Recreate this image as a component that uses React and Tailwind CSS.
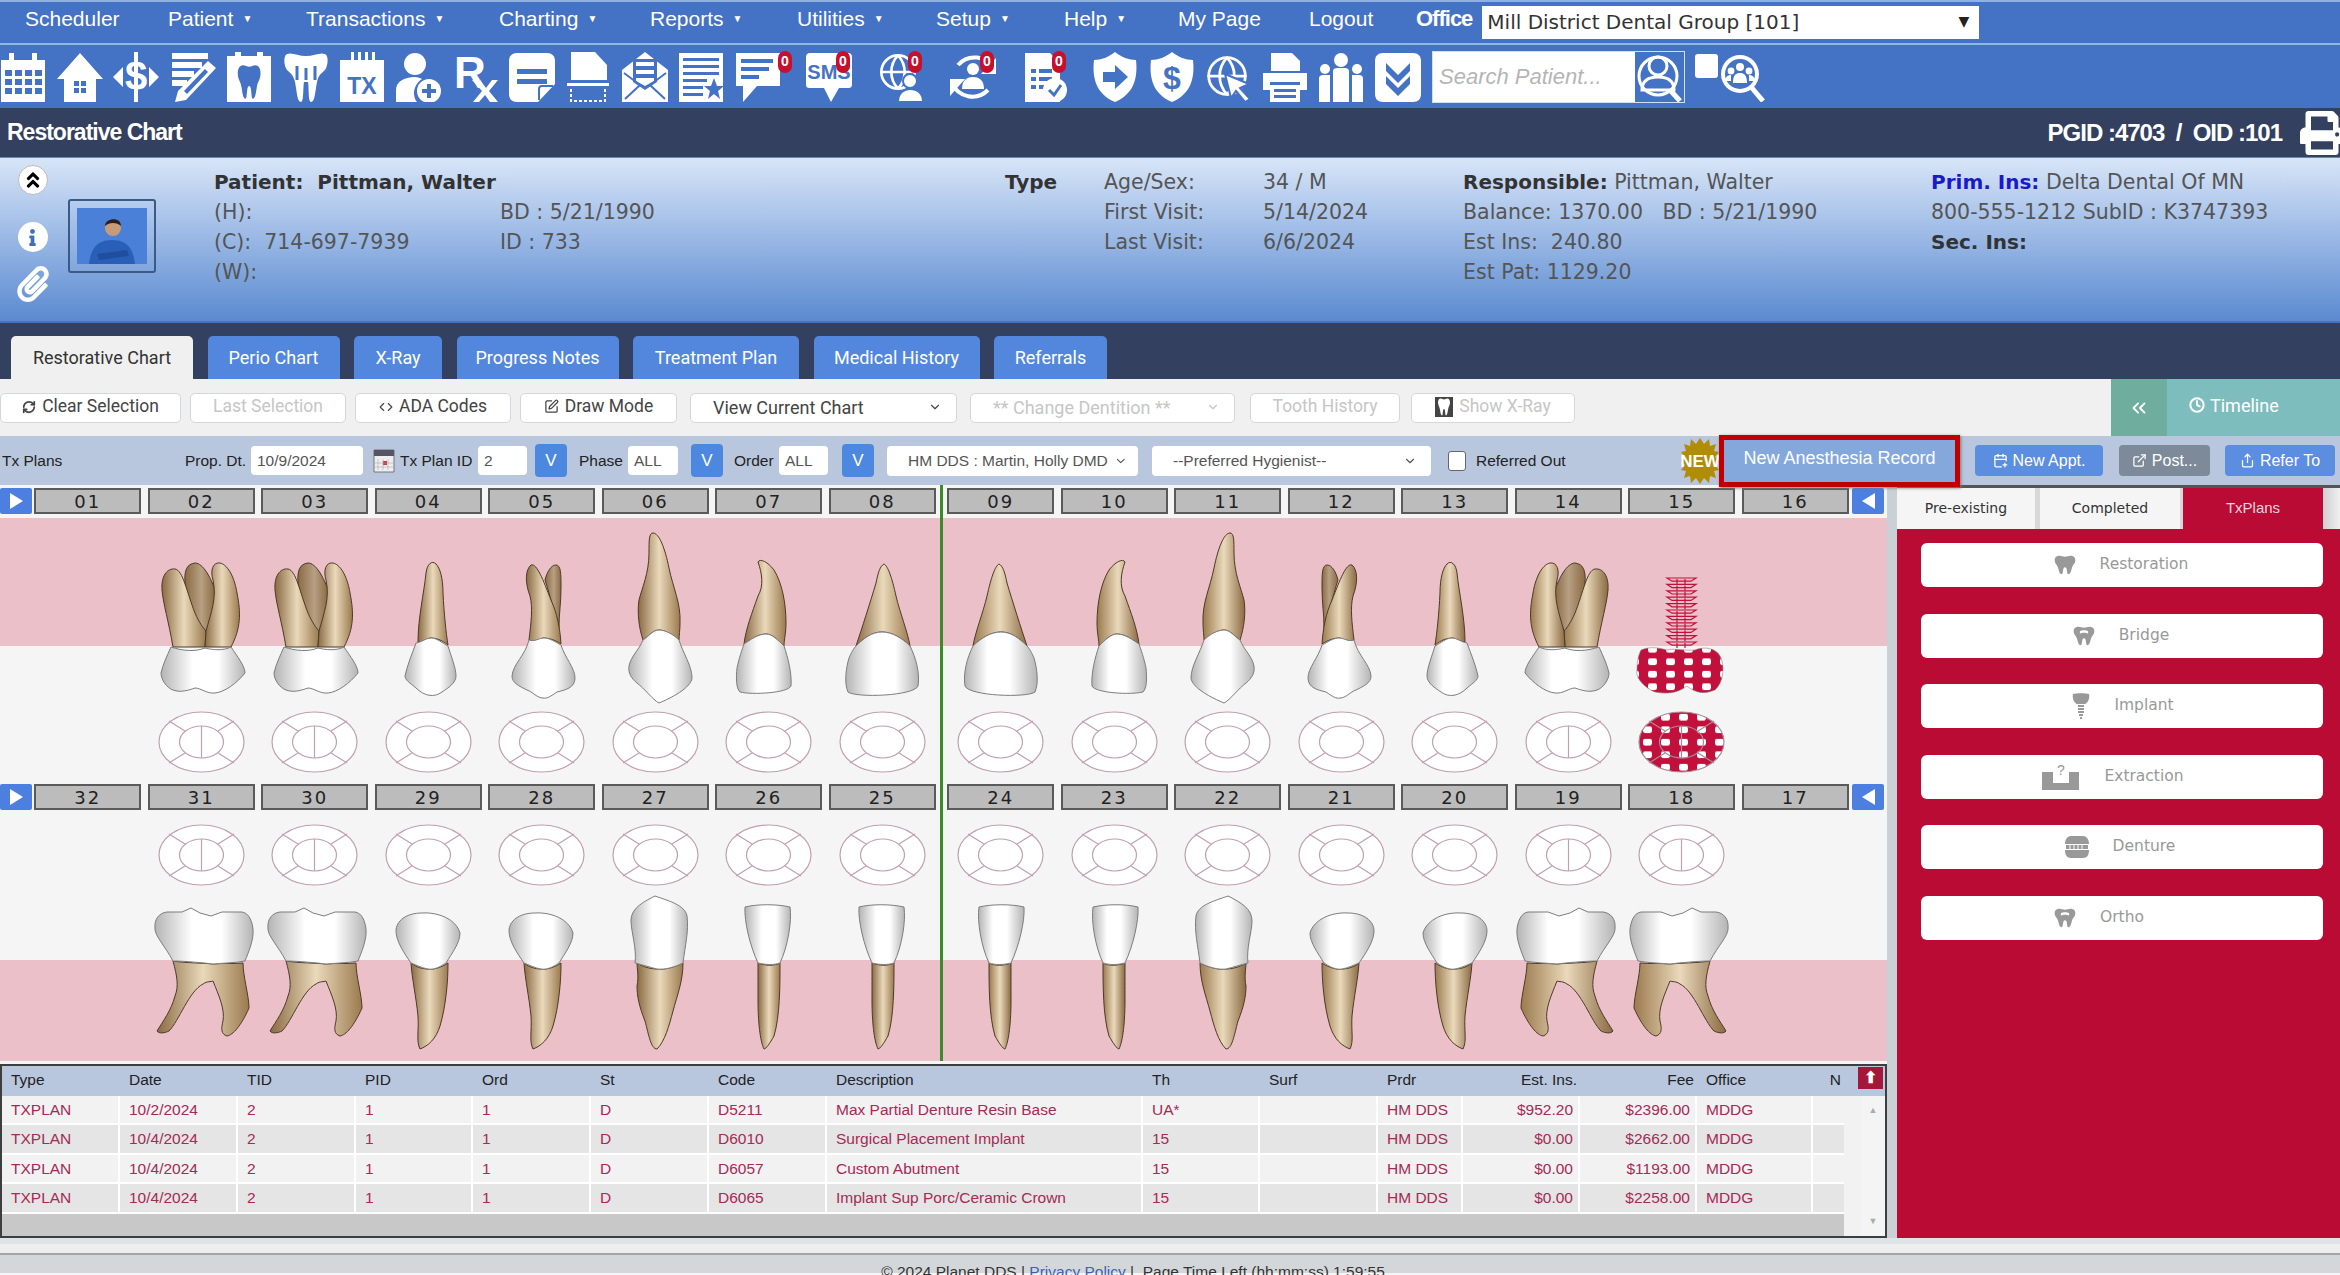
import { ChevronDown, ChevronsLeft, Clock, Code, Globe, RefreshCw, SquarePen, CalendarPlus, ExternalLink, Share } from "lucide-react";
import { FaPrint, FaPaperclip, FaInfo, FaAngleDoubleUp } from "react-icons/fa";

const BLUE = "#4472c4";
const TOOTH_D = "M8 4 C3 4 1 9 1 14 C1 22 5 24 6 32 C7 38 8 46 11 46 C14 46 12 30 16 30 C20 30 18 46 21 46 C24 46 25 38 26 32 C27 24 31 22 31 14 C31 9 29 4 24 4 C21 4 19 6 16 6 C13 6 11 4 8 4Z";

const menu = [
  { label: "Scheduler", w: "w-[143px]" },
  { label: "Patient", w: "w-[138px]", caret: true },
  { label: "Transactions", w: "w-[193px]", caret: true },
  { label: "Charting", w: "w-[151px]", caret: true },
  { label: "Reports", w: "w-[147px]", caret: true },
  { label: "Utilities", w: "w-[139px]", caret: true },
  { label: "Setup", w: "w-[128px]", caret: true },
  { label: "Help", w: "w-[114px]", caret: true },
  { label: "My Page", w: "w-[131px]" },
  { label: "Logout", w: "w-[107px]" },
];

function Ic({ children, view = "0 0 46 50" }) {
  return (
    <svg viewBox={view} className="h-[50px] w-[46px]" fill="#fff">
      {children}
    </svg>
  );
}

function Badge() {
  return (
    <span className="absolute right-[-1px] top-[-1px] flex h-[22px] w-[14px] items-center justify-center rounded-full bg-[#c8102e] text-[14px] font-bold text-white">
      0
    </span>
  );
}

const toolbarIcons = [
  <Ic key="cal">
    <path d="M1 8h44v42H1z" />
    <path d="M9 1h5v12H9zM32 1h5v12h-5z" />
    <path d="M5 18h7v6H5zM15 18h7v6h-7zM25 18h7v6h-7zM35 18h7v6h-7zM5 27h7v6H5zM15 27h7v6h-7zM25 27h7v6h-7zM35 27h7v6h-7zM5 36h7v6H5zM15 36h7v6h-7zM25 36h7v6h-7zM35 36h7v6h-7z" fill={BLUE} />
  </Ic>,
  <Ic key="home">
    <path d="M23 1 46 27H39V50H7V27H0Z" />
    <path d="M17 29h5v5h-5zM24 29h5v5h-5zM17 36h5v5h-5zM24 36h5v5h-5z" fill={BLUE} />
  </Ic>,
  <Ic key="dollar">
    <path d="M0 25 10 15V35ZM46 25 36 15V35Z" />
    <path d="M21 0h4v50h-4z" />
    <text x="23" y="38" fontSize="40" fontWeight="700" textAnchor="middle" fontFamily="Liberation Sans">$</text>
  </Ic>,
  <Ic key="pencil">
    <path d="M2 1h36v6H2zM2 10h30v6H2zM2 19h22v6H2zM2 28h15v6H2z" />
    <path d="M38 9 46 16 16 48 5 50 8 39Z" />
    <path d="M35 17 38 20 17 42 14 39Z" fill={BLUE} />
  </Ic>,
  <Ic key="toothcal">
    <path d="M1 4h44v46H1z" />
    <path d="M9 0h6v10H9zM31 0h6v10h-6z" />
    <path d={TOOTH_D} transform="translate(11 10) scale(.76 .8)" fill={BLUE} />
  </Ic>,
  <Ic key="root">
    <path d="M4 2C9 0 15 4 23 4 31 4 37 0 42 2 46 4 45 14 42 18 38 22 36 22 34 30 32 40 32 50 28 50 25 50 26 34 25 30H21C20 34 21 50 18 50 14 50 14 40 12 30 10 22 8 22 4 18 1 14 0 4 4 2Z" />
    <path d="M14 14V28M23 16V28M32 14V28" stroke={BLUE} strokeWidth="3" />
  </Ic>,
  <Ic key="tx">
    <path d="M1 8h44v42H1z" />
    <path d="M12 0h3v14h-3zM19 0h3v14h-3zM26 0h3v14h-3zM33 0h3v14h-3z" />
    <text x="23" y="42" fontSize="23" fontWeight="700" textAnchor="middle" fontFamily="Liberation Sans" fill={BLUE}>TX</text>
  </Ic>,
  <Ic key="userplus">
    <circle cx="19" cy="12" r="11" />
    <path d="M0 50V38C0 30 8 25 19 25 22 25 24 26 26 27 21 30 18 36 18 41 18 44 19 48 21 50Z" />
    <circle cx="33" cy="39" r="12" />
    <path d="M31 32h4v5h5v4h-5v5h-4v-5h-5v-4h5z" fill={BLUE} />
  </Ic>,
  <Ic key="rx">
    <text x="2" y="36" fontSize="44" fontWeight="700" fontFamily="Liberation Sans">R</text>
    <path d="M20 28h8l6 8 6-8h6l-9 11 9 11h-8l-5-7-6 7h-6l9-11Z" />
  </Ic>,
  <Ic key="note">
    <path d="M8 1H38C43 1 46 4 46 9V32L29 50H8C3 50 0 47 0 42V9C0 4 3 1 8 1Z" />
    <path d="M8 17h30v5H8zM8 27h30v5H8z" fill={BLUE} />
    <path d="M30 48V37C30 35 31 34 33 34H44" fill="none" stroke={BLUE} strokeWidth="2" />
  </Ic>,
  <Ic key="scan">
    <path d="M6 0H30L42 13V28H6Z" />
    <path d="M2 31h42v3H2z" />
    <path d="M6 37V49H40V37" fill="none" stroke="#fff" strokeWidth="2" strokeDasharray="3 2" />
  </Ic>,
  <Ic key="mail">
    <path d="M23 0 46 18V50H0V18Z" />
    <path d="M11 7H35V30L23 38 11 30Z" fill={BLUE} />
    <path d="M14 10H32V14H14zM14 18H32V22H14zM14 26H32V29L23 34 14 29Z" />
    <path d="M2 21 18 33 3 47M44 21 28 33 43 47" fill="none" stroke={BLUE} strokeWidth="2" />
  </Ic>,
  <Ic key="star">
    <path d="M1 1h44v49H1z" />
    <path d="M5 6h36v3H5zM5 13h36v3H5zM5 20h36v3H5zM5 27h24v3H5zM5 34h20v3H5zM5 41h20v3H5z" fill={BLUE} />
    <path d="M36 26 39 34H46L40 39 42 47 36 42 30 47 32 39 26 34H33Z" fill={BLUE} />
  </Ic>,
];

const badgeIcons = [
  <Ic key="chat">
    <path d="M1 1H45V34H22L8 50V34H1Z" />
    <path d="M6 7H38V11H6zM6 15H34V19H6zM6 23H24V27H6z" fill={BLUE} />
  </Ic>,
  <Ic key="sms">
    <path d="M4 1H42C45 1 46 3 46 5V32C46 35 45 36 42 36H33L25 50 18 36H4C1 36 0 35 0 32V5C0 3 1 1 4 1Z" />
    <text x="23" y="27" fontSize="20" fontWeight="700" textAnchor="middle" fontFamily="Liberation Sans" fill={BLUE}>SMS</text>
  </Ic>,
  <Ic key="globeuser">
    <foreignObject x="0" y="0" width="40" height="40">
      <Globe size={40} color="#fff" strokeWidth={1.6} />
    </foreignObject>
    <circle cx="32" cy="29" r="7" stroke={BLUE} strokeWidth="2" />
    <path d="M20 50C20 41 26 37 32 37 39 37 45 41 45 50Z" stroke={BLUE} strokeWidth="2" />
  </Ic>,
  <Ic key="refresh">
    <path d="M8 13A22 22 0 0 1 44 17M38 38A22 22 0 0 1 2 31" fill="none" stroke="#fff" strokeWidth="4" />
    <path d="M46 6V22H31ZM0 44V27H15Z" />
    <circle cx="23" cy="17" r="6" />
    <path d="M12 37C12 28 17 25 23 25 29 25 34 28 34 37Z" />
  </Ic>,
  <Ic key="doccheck">
    <path d="M3 1H28L38 11V50H3Z" />
    <path d="M9 17H14V21H9zM17 17H30V21H17zM9 25H14V29H9zM17 25H30V29H17zM9 33H14V37H9zM17 33H24V37H17z" fill={BLUE} />
    <circle cx="33" cy="38" r="12" />
    <path d="M27 38 32 43 39 33" fill="none" stroke={BLUE} strokeWidth="3" />
  </Ic>,
];

const tailIcons = [
  <Ic key="shieldarrow">
    <path d="M23 0C29 5 37 8 44 8 46 26 42 42 23 50 4 42 0 26 2 8 9 8 17 5 23 0Z" />
    <path d="M11 20H23V13L36 25 23 37V30H11Z" fill={BLUE} />
  </Ic>,
  <Ic key="shielddollar">
    <path d="M23 0C29 5 37 8 44 8 46 26 42 42 23 50 4 42 0 26 2 8 9 8 17 5 23 0Z" />
    <text x="23" y="37" fontSize="32" fontWeight="700" textAnchor="middle" fontFamily="Liberation Sans" fill={BLUE}>$</text>
  </Ic>,
  <Ic key="globecursor">
    <foreignObject x="0" y="2" width="44" height="46">
      <Globe size={44} color="#fff" strokeWidth={1.5} />
    </foreignObject>
    <path d="M20 22 44 32 35 36 45 47 40 50 31 39 26 46Z" stroke={BLUE} strokeWidth="2" />
  </Ic>,
  <Ic key="printer">
    <path d="M9 1H30L38 9V19H9Z" />
    <path d="M1 21H45V38H38V30H8V38H1Z" />
    <path d="M8 33H38V50H8Z" />
    <path d="M12 37H34V40H12zM12 43H34V46H12z" fill={BLUE} />
  </Ic>,
  <Ic key="people">
    <circle cx="23" cy="8" r="7" />
    <path d="M15 19C15 17 17 16 19 16H27C29 16 31 17 31 19V50H15Z" />
    <circle cx="7" cy="17" r="5" />
    <path d="M1 26C1 24 3 23 5 23H12V50H1Z" />
    <circle cx="39" cy="17" r="5" />
    <path d="M34 23H41C43 23 45 24 45 26V50H34Z" />
  </Ic>,
  <Ic key="chev">
    <path d="M8 1H38C43 1 46 4 46 9V42C46 47 43 50 38 50H8C3 50 0 47 0 42V9C0 4 3 1 8 1Z" />
    <path d="M11 11 23 23 35 11V19L23 31 11 19ZM11 24 23 36 35 24V32L23 44 11 32Z" fill={BLUE} />
  </Ic>,
];

function SearchUser() {
  return (
    <svg viewBox="0 0 46 50" className="h-[50px] w-[46px]">
      <circle cx="21" cy="14" r="9" fill="none" stroke="#fff" strokeWidth="3" />
      <path d="M5 38C5 28 12 25 21 25 30 25 37 28 37 38Z" fill="none" stroke="#fff" strokeWidth="3" />
      <circle cx="21" cy="24" r="19" fill="none" stroke="#fff" strokeWidth="3" />
      <path d="M33 38 43 49" stroke="#fff" strokeWidth="5" />
    </svg>
  );
}

function SearchGroup() {
  return (
    <svg viewBox="0 0 48 50" className="h-[50px] w-[48px]">
      <circle cx="22" cy="22" r="19" fill="#fff" />
      <circle cx="22" cy="22" r="15" fill={BLUE} />
      <circle cx="22" cy="15" r="4" fill="#fff" />
      <circle cx="13" cy="19" r="3.4" fill="#fff" />
      <circle cx="31" cy="19" r="3.4" fill="#fff" />
      <path d="M15 31C15 23 18 21 22 21 26 21 29 23 29 31ZM7 29C7 25 10 23 13 23L13 29ZM37 29C37 25 34 23 31 23L31 29Z" fill="#fff" />
      <path d="M34 36 45 49" stroke="#fff" strokeWidth="5" />
    </svg>
  );
}

function TopBars() {
  return (
    <>
      <div className="flex h-[45px] items-center border-t-2 border-b-2 border-t-[#8fb0e0] border-b-[#8fb7e6] bg-[#4472c4] pl-[25px] text-[21px] text-white">
        {menu.map((m) => (
          <div key={m.label} className={`${m.w} flex shrink-0 items-center gap-[9px] pb-[8px]`}>
            {m.label}
            {m.caret && <span className="text-[10px]">▼</span>}
          </div>
        ))}
        <b className="pb-[8px] text-[22px] tracking-[-1px]">Office</b>
        <div className="ml-[10px] flex h-[33px] w-[497px] items-center justify-between bg-white pb-[2px] pl-[5px] pr-[10px] font-['DejaVu_Sans',sans-serif] text-[20px] text-[#333]">
          Mill District Dental Group [101]
          <span className="text-[14px] text-[#222]">▼</span>
        </div>
      </div>
      <div className="flex h-[63px] items-center bg-[#4472c4] pl-0">
        <div className="ml-[-5px] flex shrink-0">
          {toolbarIcons.map((icon, i) => (
            <div key={i} className="flex w-[56.5px] shrink-0 justify-center">{icon}</div>
          ))}
          <div className="relative flex w-[56.5px] shrink-0 justify-center">{badgeIcons[0]}<span className="absolute right-[-5px] top-0"><Badge /></span></div>
        </div>
        <div className="ml-[7px] flex shrink-0">
          {badgeIcons.slice(1).map((icon, i) => (
            <div key={i} className="relative flex w-[72px] shrink-0 justify-center">
              {icon}
              <span className="absolute right-[16px] top-0"><Badge /></span>
            </div>
          ))}
        </div>
        <div className="ml-[6px] flex shrink-0">
          {tailIcons.map((icon, i) => (
            <div key={i} className="flex w-[56.5px] shrink-0 justify-center">{icon}</div>
          ))}
        </div>
        <div className="ml-[6px] flex h-[52px] w-[253px] shrink-0 border border-[#cfe0f5] bg-white">
          <div className="flex flex-1 items-center pl-[6px] text-[22px] italic text-[#b5b5b5]">Search Patient...</div>
          <div className="flex w-[49px] items-center justify-center bg-[#4472c4]"><SearchUser /></div>
        </div>
        <div className="ml-[10px] mb-[22px] h-[24px] w-[23px] rounded-[3px] bg-white" />
        <SearchGroup />
      </div>
      <div className="flex h-[50px] items-center justify-between border-b border-[#6f86ad] bg-[#344060] pl-[7px] text-white">
        <b className="text-[23px] tracking-[-1px]">Restorative Chart</b>
        <div className="flex items-center">
          <b className="text-[24px] tracking-[-1px]">PGID :4703 &nbsp;/ &nbsp;OID :101</b>
          <FaPrint className="ml-[16px] mr-[-6px] h-[44px] w-[48px]" />
        </div>
      </div>
    </>
  );
}

function Avatar() {
  return (
    <div className="flex h-[74px] w-[88px] items-center justify-center rounded-[3px] border-2 border-[#3c5a86]">
      <svg viewBox="0 0 70 56" className="h-[56px] w-[70px] bg-[#4a80d8]">
        <path d="M12 56C14 38 22 32 35 32 48 32 56 38 58 56Z" fill="#2a5fb8" />
        <path d="M20 46 50 42 52 48 22 52Z" fill="#1f4e9e" />
        <circle cx="36" cy="20" r="8" fill="#c79a78" />
        <path d="M28 18C28 10 44 8 44 18 40 14 32 14 28 18Z" fill="#2a1f1a" />
      </svg>
    </div>
  );
}

function PatientPanel() {
  const line = "h-[30px] leading-[30px]";
  return (
    <div className="flex h-[163px] bg-gradient-to-b from-[#d8e5f7] to-[#5b8ad0] font-['DejaVu_Sans',sans-serif] text-[20.5px] text-[#555]">
      <div className="flex w-[68px] shrink-0 flex-col items-center pr-[3px] pt-[7px]">
        <div className="flex h-[30px] w-[30px] items-center justify-center rounded-full border border-[#bbb] bg-white text-black"><FaAngleDoubleUp size={20} /></div>
        <div className="mt-[27px] flex h-[30px] w-[30px] items-center justify-center rounded-full bg-white text-[#3f6fb5]"><FaInfo size={17} /></div>
        <FaPaperclip className="mt-[14px] text-white" size={36} />
      </div>
      <div className="w-[146px] shrink-0 pt-[41px]"><Avatar /></div>
      <div className="w-[286px] shrink-0 pt-[9px]">
        <div className={`${line} w-[500px] text-[20px] font-bold text-[#333]`}>Patient:&nbsp; Pittman, Walter</div>
        <div className={line}>(H):</div>
        <div className={line}>(C):&nbsp; 714-697-7939</div>
        <div className={line}>(W):</div>
      </div>
      <div className="w-[505px] shrink-0 pt-[39px]">
        <div className={line}>BD : 5/21/1990</div>
        <div className={line}>ID : 733</div>
      </div>
      <div className="w-[99px] shrink-0 pt-[9px] text-[20px] font-bold text-[#333]"><div className={line}>Type</div></div>
      <div className="w-[159px] shrink-0 pt-[9px]">
        <div className={line}>Age/Sex:</div>
        <div className={line}>First Visit:</div>
        <div className={line}>Last Visit:</div>
      </div>
      <div className="w-[200px] shrink-0 pt-[9px]">
        <div className={line}>34 / M</div>
        <div className={line}>5/14/2024</div>
        <div className={line}>6/6/2024</div>
      </div>
      <div className="w-[468px] shrink-0 pt-[9px]">
        <div className={line}><b className="text-[20px] text-[#333]">Responsible:</b> Pittman, Walter</div>
        <div className={line}>Balance: 1370.00 &nbsp; BD : 5/21/1990</div>
        <div className={line}>Est Ins:&nbsp; 240.80</div>
        <div className={line}>Est Pat: 1129.20</div>
      </div>
      <div className="pt-[9px]">
        <div className={line}><b className="text-[20px] text-[#1a1ac8]">Prim. Ins:</b> Delta Dental Of MN</div>
        <div className={line}>800-555-1212 SubID : K3747393</div>
        <div className={`${line} text-[20px] font-bold text-[#333]`}>Sec. Ins:</div>
      </div>
    </div>
  );
}

const tabs = [
  { label: "Restorative Chart", w: "w-[182px]", active: true },
  { label: "Perio Chart", w: "w-[132px]" },
  { label: "X-Ray", w: "w-[88px]" },
  { label: "Progress Notes", w: "w-[162px]" },
  { label: "Treatment Plan", w: "w-[166px]" },
  { label: "Medical History", w: "w-[166px]" },
  { label: "Referrals", w: "w-[113px]" },
];

function Tabs() {
  return (
    <div className="flex h-[58px] items-end gap-[14.5px] border-t-2 border-[#4472c4] bg-[#344060] pl-[11px] font-['Roboto',sans-serif] text-[18px]">
      {tabs.map((t) => (
        <div key={t.label} className={`${t.w} flex h-[43px] items-center justify-center rounded-t-[5px] ${t.active ? "bg-[#f0f0f0] text-[#333]" : "bg-[#5287dd] text-white"}`}>
          {t.label}
        </div>
      ))}
    </div>
  );
}

function Btn({ w, disabled, icon, children }) {
  return (
    <div className={`${w} flex h-[30px] shrink-0 items-center justify-center gap-[6px] rounded-[5px] border border-[#d3d6da] bg-white pb-[2px] ${disabled ? "text-[#c6c6c6]" : "text-[#444]"}`}>
      {icon}
      {children}
    </div>
  );
}

function Sel({ w, disabled, children }) {
  return (
    <div className={`${w} flex h-[30px] shrink-0 items-center justify-between rounded-[5px] border border-[#d3d6da] bg-white pb-[1px] pl-[22px] pr-[14px] text-[18px] ${disabled ? "text-[#c6c6c6]" : "text-[#444]"}`}>
      {children}
      <ChevronDown size={14} />
    </div>
  );
}

function ActionBar() {
  return (
    <div className="flex h-[57px] items-center bg-[#f0f0f0] font-['Roboto',sans-serif] text-[17.5px]">
      <Btn w="w-[181px]" icon={<RefreshCw size={14} strokeWidth={3} />}>Clear Selection</Btn>
      <div className="ml-[9px]"><Btn w="w-[156px]" disabled>Last Selection</Btn></div>
      <div className="ml-[9px]"><Btn w="w-[156px]" icon={<Code size={14} />}>ADA Codes</Btn></div>
      <div className="ml-[9px]"><Btn w="w-[157px]" icon={<SquarePen size={15} />}>Draw Mode</Btn></div>
      <div className="ml-[13px]"><Sel w="w-[267px]">View Current Chart</Sel></div>
      <div className="ml-[13px]"><Sel w="w-[265px]" disabled>** Change Dentition **</Sel></div>
      <div className="ml-[15px]"><Btn w="w-[150px]" disabled>Tooth History</Btn></div>
      <div className="ml-[11px]">
        <Btn w="w-[164px]" disabled icon={<svg viewBox="0 0 32 50" className="h-[20px] w-[18px] bg-[#444]"><path d={TOOTH_D} fill="#fff" /></svg>}>Show X-Ray</Btn>
      </div>
      <div className="ml-auto flex h-full w-[229px] text-white">
        <div className="flex w-[56px] items-center justify-center bg-[#6fae9f]"><ChevronsLeft size={22} /></div>
        <div className="flex flex-1 items-center gap-[5px] bg-[#7dbdbd] pb-[5px] pl-[22px] text-[18px]"><Clock size={16} strokeWidth={3} />Timeline</div>
      </div>
    </div>
  );
}

function VBtn() {
  return <div className="flex h-[33px] w-[32px] shrink-0 items-center justify-center rounded-[4px] bg-[#4d88e0] text-[17px] text-white">V</div>;
}

function Field({ w, children }) {
  return <div className={`${w} flex h-[29px] shrink-0 items-center rounded-[4px] bg-white pl-[6px] text-[#555]`}>{children}</div>;
}

function ActionBlue({ w, gray, icon, children }) {
  return (
    <div className={`${w} flex h-[31px] shrink-0 items-center justify-center gap-[5px] rounded-[4px] text-[16px] text-white ${gray ? "bg-[#7d8a99]" : "bg-[#5b8de0]"}`}>
      {icon}
      {children}
    </div>
  );
}

function FilterBar() {
  return (
    <div className="flex h-[49px] items-center bg-[#b9c7de] pl-[2px] text-[15.5px] text-[#222]">
      <span className="w-[183px] shrink-0">Tx Plans</span>
      <span className="w-[66px] shrink-0">Prop. Dt.</span>
      <Field w="w-[112px]">10/9/2024</Field>
      <svg viewBox="0 0 22 24" className="ml-[10px] h-[24px] w-[22px] shrink-0">
        <path d="M1 1h20v22H1z" fill="#eee" stroke="#777" />
        <path d="M1 1h20v6H1z" fill="#556" />
        <path d="M10 12h4v4h-4z" fill="#c33" />
        <path d="M5 10V21M10 10V21M15 10V21M2 14H20M2 18H20" stroke="#aab" strokeWidth=".6" />
      </svg>
      <span className="ml-[5px] w-[78px] shrink-0">Tx Plan ID</span>
      <Field w="w-[49px]">2</Field>
      <span className="ml-[8px]"><VBtn /></span>
      <span className="ml-[12px] w-[49px] shrink-0">Phase</span>
      <Field w="w-[50px]">ALL</Field>
      <span className="ml-[13px]"><VBtn /></span>
      <span className="ml-[11px] w-[45px] shrink-0">Order</span>
      <Field w="w-[49px]">ALL</Field>
      <span className="ml-[14px]"><VBtn /></span>
      <div className="ml-[13px] flex h-[30px] w-[251px] shrink-0 items-center justify-between rounded-[4px] bg-white pl-[21px] pr-[10px] text-[#555]">
        <span className="w-[214px] overflow-hidden whitespace-nowrap">HM DDS : Martin, Holly DMD</span>
        <ChevronDown size={14} />
      </div>
      <div className="ml-[14px] flex h-[30px] w-[279px] shrink-0 items-center justify-between rounded-[4px] bg-white pl-[21px] pr-[14px] text-[#555]">
        --Preferred Hygienist--
        <ChevronDown size={14} />
      </div>
      <span className="ml-[17px] h-[20px] w-[18px] shrink-0 rounded-[3px] border border-[#666] bg-white" />
      <span className="ml-[10px] w-[205px] shrink-0">Referred Out</span>
      <div className="relative z-10 flex h-[46px] w-[38px] shrink-0 items-center">
        <svg viewBox="0 0 38 46" className="h-[46px] w-[38px]">
          <path d="M19 0 23 6 28 1 29 8 35 6 33 13 38 14 34 19 38 23 34 27 38 32 33 33 35 40 29 38 28 45 23 40 19 46 15 40 10 45 9 38 3 40 5 33 0 32 4 27 0 23 4 19 0 14 5 13 3 6 9 8 10 1 15 6Z" fill="#b18c05" />
          <text x="19" y="29" fontSize="17" fontWeight="700" textAnchor="middle" fill="#fff" fontFamily="Liberation Sans">NEW</text>
        </svg>
      </div>
      <div className="z-10 flex h-[52px] w-[241px] shrink-0 items-center justify-center border-[5px] border-[#c00000] bg-[#85a8dc] pb-[4px] text-[18px] text-white shadow-[1px_1px_3px_#777]">
        New Anesthesia Record
      </div>
      <div className="ml-[15px]"><ActionBlue w="w-[128px]" icon={<CalendarPlus size={15} />}>New Appt.</ActionBlue></div>
      <div className="ml-[16px]"><ActionBlue w="w-[91px]" gray icon={<ExternalLink size={15} />}>Post...</ActionBlue></div>
      <div className="ml-[15px]"><ActionBlue w="w-[110px]" icon={<Share size={15} />}>Refer To</ActionBlue></div>
    </div>
  );
}

// tooth outlines, one column wide (113 x 187), root drawn under the crown
const SHAPES = {
  molarU: {
    back: "M61 113C50 105 43 85 40 65 39 52 42 46 50 45 58 45 66 60 70 72 70 90 66 105 61 113Z",
    root: ["M28 129C24 105 18 85 17 72 16 58 22 50 30 51 38 52 42 75 50 95 54 104 58 110 61 113L60 129Z", "M60 129 61 113C66 95 72 80 68 62 65 52 68 44 75 45 84 47 90 62 92 75 96 95 96 110 86 129Z"],
    crown: "M26 129C22 138 18 146 16 155 16 162 22 170 28 172 36 175 44 172 50 170 56 170 62 176 70 175 80 174 92 165 100 155 100 148 92 138 86 129 78 133 68 132 60 130 50 134 38 133 26 129Z",
  },
  premolarU: {
    root: ["M46 124C46 100 52 75 54 55 55 46 60 42 64 46 68 50 71 60 71 75 72 95 74 115 76 127 70 122 64 120 58 120 54 122 50 124 46 124Z"],
    crown: "M44 125C50 124 54 120 59 120 65 120 70 125 76 128 79 138 84 150 84 158 84 165 76 170 70 174 62 180 52 178 44 170 38 165 33 162 33 158 35 148 40 136 44 125Z",
  },
  twoRootU: {
    back: "M60 62C62 54 66 47 71 47 76 47 76 56 76 70 76 85 74 95 74 110 70 100 66 80 60 62Z",
    root: ["M44 122C46 105 48 90 45 78 40 65 40 52 46 47 52 45 58 62 66 82 72 95 75 110 76 126 70 122 64 120 58 120 54 122 48 124 44 122Z"],
    crown: "M44 122C50 124 54 120 59 120 65 120 70 124 76 127 80 140 90 150 90 160 90 170 80 172 72 174 66 178 62 181 58 180 52 180 48 174 42 172 34 168 27 165 27 158 28 146 40 138 44 122Z",
  },
  canineU: {
    root: ["M44 122C40 110 38 95 40 82 43 70 50 55 50 35 50 22 50 15 54 15 60 15 66 30 70 50 74 70 82 85 81 105 81 112 80 118 80 122 72 116 66 112 60 112 54 112 50 118 44 122Z"],
    crown: "M44 122C50 118 54 112 60 112 66 112 74 116 80 122 84 135 93 148 93 160 92 170 72 180 60 185 54 182 45 170 38 165 32 160 29 155 30 148 32 138 40 132 44 122Z",
  },
  lateralU: {
    root: ["M32 126C34 110 40 95 46 78 52 68 50 55 46 44 48 40 56 44 62 52 70 65 74 85 74 105 74 115 72 122 72 128 66 122 60 116 54 116 46 116 38 122 32 126Z"],
    crown: "M32 126C38 122 46 116 54 116 60 116 66 122 72 128 76 140 80 155 79 168 76 175 40 177 28 174 24 170 24 160 25 150 27 140 30 132 32 126Z",
  },
  centralU: {
    root: ["M30 128C36 110 44 85 50 65 52 55 54 48 58 46 62 48 66 60 70 78 74 95 82 115 84 128 76 120 66 114 56 114 46 114 38 120 30 128Z"],
    crown: "M30 128C38 120 46 114 56 114 66 114 76 120 84 128 90 140 94 155 92 168 88 178 30 180 22 174 18 165 20 150 23 140 25 135 28 130 30 128Z",
  },
  molarL: {
    root: ["M28 70C32 85 34 95 30 105 26 120 18 130 12 140 14 143 20 142 24 140 34 130 44 100 58 93 62 90 66 91 68 90 74 105 80 118 78 130 76 138 76 143 82 145 88 144 96 135 104 117 104 105 98 85 98 72 88 73 78 72 68 73 58 72 40 72 28 70Z"],
    crown: "M28 70C20 55 10 45 10 38 9 28 14 22 22 21L37 21 46 17 55 22 66 25 77 21 97 21C104 22 107 30 108 38 109 48 104 60 100 70 90 72 78 72 68 73 60 72 40 70 28 70Z",
  },
  premolarL: {
    root: ["M39 72C44 76 50 78 56 78 62 79 70 76 76 72 76 90 74 115 68 135 64 148 56 155 48 158 44 150 47 140 46 125 44 105 40 88 39 72Z"],
    crown: "M39 72C32 62 24 50 24 40 24 30 34 22 50 22 66 21 84 28 88 42 88 52 80 62 74 72 68 76 62 79 56 78 50 77 44 74 39 72Z",
  },
  canineL: {
    root: ["M38 72C44 76 52 78 58 78 66 79 76 76 84 72 84 90 78 105 74 120 70 135 66 150 58 158 52 158 50 145 46 130 40 115 38 105 38 95 40 85 38 78 38 72Z"],
    crown: "M36 72C38 58 32 40 32 30 32 18 42 12 56 5 70 10 86 14 88 25 90 40 86 55 84 72 76 76 66 79 58 78 50 76 44 74 36 72Z",
  },
  incisorL: {
    root: ["M46 72C54 75 62 75 68 72 68 95 68 125 62 145 58 152 54 158 52 158 48 150 46 130 46 110 46 95 46 85 46 72Z"],
    crown: "M33 16C45 13 65 13 78 16 80 30 76 55 68 72 62 74 54 74 46 72 38 55 32 30 33 16Z",
  },
};

const upperTeeth = [null, "molarU", "molarU", "premolarU", "twoRootU", "canineU", "lateralU", "centralU", "centralU", "lateralU", "canineU", "twoRootU", "premolarU", "molarU", "implant", null];
const lowerTeeth = [null, "molarL", "molarL", "premolarL", "premolarL", "canineL", "incisorL", "incisorL", "incisorL", "incisorL", "canineL", "premolarL", "premolarL", "molarL", "molarL", null];

function Defs() {
  return (
    <defs>
      <linearGradient id="rootG">
        <stop offset="0" stopColor="#8a6a42" />
        <stop offset=".5" stopColor="#ead9bb" />
        <stop offset="1" stopColor="#9b7a4e" />
      </linearGradient>
      <linearGradient id="backG">
        <stop offset="0" stopColor="#8a6a42" />
        <stop offset=".55" stopColor="#b8a084" />
        <stop offset="1" stopColor="#8a6a42" />
      </linearGradient>
      <linearGradient id="crownG">
        <stop offset="0" stopColor="#b4b4b4" />
        <stop offset=".38" stopColor="#fff" />
        <stop offset=".68" stopColor="#fff" />
        <stop offset="1" stopColor="#b4b4b4" />
      </linearGradient>
      <pattern id="implantP" width="18" height="12.5" patternUnits="userSpaceOnUse">
        <rect width="18" height="12.5" fill="#c1103c" />
        <rect x="5" y="3" width="9" height="6.5" rx="2" fill="#fff" />
      </pattern>
    </defs>
  );
}

function Tooth({ name, flip, height }) {
  if (!name) return null;
  if (name === "implant") {
    const steps = [];
    for (let y = 60; y < 130; y += 6.4) steps.push(y);
    return (
      <svg viewBox={`0 0 113 ${height}`} className="w-[113px]">
        <Defs />
        {steps.map((y) => (
          <path key={y} d={`M42 ${y}H71L66 ${y + 3.2}H47ZM52 ${y + 1}V${y + 6}M60 ${y + 1}V${y + 6}`} fill="none" stroke="#c1103c" strokeWidth="1.2" />
        ))}
        <path d="M16 132C25 128 35 130 42 132 50 130 60 133 70 132 80 128 92 130 96 140 100 150 98 165 90 172 80 176 72 176 62 168 52 176 40 176 30 174 20 170 10 160 12 152 12 142 14 136 16 132Z" fill="url(#implantP)" stroke="#888" strokeWidth="0.6" />
      </svg>
    );
  }
  const s = SHAPES[name];
  return (
    <svg viewBox={`0 0 113 ${height}`} className="w-[113px]">
      <Defs />
      <g transform={flip ? "translate(113 0) scale(-1 1)" : undefined}>
        {s.back && <path d={s.back} fill="url(#backG)" stroke="#4b3b28" strokeWidth="1" />}
        {s.root.map((d) => <path key={d} d={d} fill="url(#rootG)" stroke="#4b3b28" strokeWidth="1" />)}
        <path d={s.crown} fill="url(#crownG)" stroke="#7d7d7d" strokeWidth="1" />
      </g>
    </svg>
  );
}

function Oval({ split, filled }) {
  const line = filled ? "#a98a9a" : "#bfa0b0";
  return (
    <svg viewBox="0 0 87 62" className="h-[62px] w-[87px]">
      <Defs />
      <ellipse cx="43.5" cy="31" rx="42.5" ry="30" fill={filled ? "url(#implantP)" : "#fff"} stroke={line} strokeWidth="1.2" />
      <ellipse cx="43.5" cy="31" rx="22" ry="16" fill="none" stroke={line} strokeWidth="1.2" />
      <path d="M11 10 27 20M76 10 60 20M11 52 27 42M76 52 60 42" stroke={line} strokeWidth="1.2" />
      {split && <path d="M43.5 15V47" stroke={line} strokeWidth="1.2" />}
    </svg>
  );
}

// 16 columns on the number-button pitch, the midline leaves 5px after the 8th
function Columns({ items, render, className = "" }) {
  return (
    <div className={`flex pl-[31px] ${className}`}>
      {items.map((it, i) => (
        <div key={i} className={`flex w-[113.5px] shrink-0 justify-center ${i === 8 ? "ml-[5px]" : ""}`}>
          {render(it, i)}
        </div>
      ))}
    </div>
  );
}

function Arrow({ left }) {
  return (
    <div className={`absolute top-[3px] flex h-[26px] w-[32px] items-center justify-center rounded-[2px] bg-[#4d7fe0] ${left ? "right-[3px]" : "left-0"}`}>
      <span className={`h-0 w-0 border-y-[8px] border-y-transparent ${left ? "border-r-[13px] border-r-white" : "border-l-[13px] border-l-white"}`} />
    </div>
  );
}

function NumberRow({ nums }) {
  return (
    <div className="relative h-[33px] bg-[#f5f5f5] pt-[3px]">
      <Columns
        items={nums}
        render={(n) => (
          <div className="flex h-[26px] w-[107px] items-center justify-center border-2 border-[#5a5a5a] bg-[#bcbcbc] font-['DejaVu_Sans',sans-serif] text-[18px] tracking-[2px] text-[#222]">
            {n}
          </div>
        )}
      />
      <Arrow />
      <Arrow left />
    </div>
  );
}

const upperNums = ["01", "02", "03", "04", "05", "06", "07", "08", "09", "10", "11", "12", "13", "14", "15", "16"];
const lowerNums = ["32", "31", "30", "29", "28", "27", "26", "25", "24", "23", "22", "21", "20", "19", "18", "17"];
const isMolar = (i) => i < 3 || i > 12;

function Chart() {
  return (
    <div className="relative">
      <NumberRow nums={upperNums} />
      <Columns
        className="h-[187px] bg-[linear-gradient(#ebc0c8_128px,#f5f5f5_128px)]"
        items={upperTeeth}
        render={(t, i) => <Tooth name={t} flip={i > 7} height={187} />}
      />
      <Columns
        className="h-[76px] bg-[#f5f5f5] pt-[6px]"
        items={upperNums}
        render={(n, i) => (i === 0 || i === 15 ? null : <Oval split={isMolar(i)} filled={i === 14} />)}
      />
      <NumberRow nums={lowerNums} />
      <Columns
        className="h-[77px] bg-[#f5f5f5] pt-[10px]"
        items={lowerNums}
        render={(n, i) => (i === 0 || i === 15 ? null : <Oval split={isMolar(i)} />)}
      />
      <Columns
        className="h-[170px] bg-[linear-gradient(#f5f5f5_69px,#ebc0c8_69px)]"
        items={lowerTeeth}
        render={(t, i) => <Tooth name={t} flip={i > 7} height={170} />}
      />
      <div className="absolute bottom-0 left-[940px] top-0 w-[3px] bg-[#3c8a2a]" />
    </div>
  );
}

const cols = "grid grid-cols-[118px_118px_118px_117px_118px_118px_118px_316px_117px_118px_85px_117px_117px_116px]";
const rows = [
  ["TXPLAN", "10/2/2024", "2", "1", "1", "D", "D5211", "Max Partial Denture Resin Base", "UA*", "", "HM DDS", "$952.20", "$2396.00", "MDDG", ""],
  ["TXPLAN", "10/4/2024", "2", "1", "1", "D", "D6010", "Surgical Placement Implant", "15", "", "HM DDS", "$0.00", "$2662.00", "MDDG", ""],
  ["TXPLAN", "10/4/2024", "2", "1", "1", "D", "D6057", "Custom Abutment", "15", "", "HM DDS", "$0.00", "$1193.00", "MDDG", ""],
  ["TXPLAN", "10/4/2024", "2", "1", "1", "D", "D6065", "Implant Sup Porc/Ceramic Crown", "15", "", "HM DDS", "$0.00", "$2258.00", "MDDG", ""],
];
const head = ["Type", "Date", "TID", "PID", "Ord", "St", "Code", "Description", "Th", "Surf", "Prdr", "Est. Ins.", "Fee", "Office"];
const rightCol = (i) => i === 11 || i === 12;

function Table() {
  return (
    <div className="relative flex h-[175px] flex-col border-2 border-[#3e3e3e] bg-[#c8c8c8] text-[15.5px]">
      <div className="flex h-[30px] items-center bg-[#b9c7de] pb-[3px] text-[#222]">
        <div className={`${cols} w-full`}>
          {head.map((h, i) => (
            <div key={h} className={`${rightCol(i) ? "pr-[3px] text-right" : "pl-[9px]"}`}>{h}</div>
          ))}
        </div>
        <span className="mr-[44px]">N</span>
        <div className="absolute right-[2px] top-[1px] flex h-[22px] w-[25px] items-center justify-center bg-[#a5173a] text-[16px] font-bold leading-none text-white">⬆</div>
      </div>
      <div className="flex flex-1">
        <div className="w-[1842px] shrink-0">
          {rows.map((r, ri) => (
            <div key={ri} className={`${cols} h-[29.4px] items-center border-b-2 border-white text-[#a52a55] ${ri % 2 ? "bg-[#e5e5e5]" : "bg-[#f2f2f2]"}`}>
              {r.slice(0, 14).map((c, i) => (
                <div key={i} className={`flex h-full items-center border-r-2 border-white ${rightCol(i) ? "justify-end pr-[5px]" : "pl-[9px]"}`}>{c}</div>
              ))}
            </div>
          ))}
        </div>
        <div className="flex flex-1 flex-col items-end justify-between bg-[#f2f2f2]">
          <div className="flex h-full w-[24px] flex-col items-center justify-between bg-[#f4f4f4] py-[8px] text-[9px] text-[#aaa]">
            <span>▲</span>
            <span>▼</span>
          </div>
        </div>
      </div>
    </div>
  );
}

function IcoTooth({ hole }) {
  return (
    <svg viewBox="0 0 32 50" preserveAspectRatio="none" className="h-[22px] w-[22px]" fill="#999">
      <path d={TOOTH_D} />
      {hole && <path d="M10 14C13 11 19 11 22 14V20C19 17 13 17 10 20Z" fill="#fff" />}
    </svg>
  );
}

const treatments = [
  { label: "Restoration", icon: <IcoTooth /> },
  { label: "Bridge", icon: <IcoTooth hole /> },
  {
    label: "Implant",
    icon: (
      <svg viewBox="0 0 18 26" className="h-[26px] w-[18px]" fill="#999">
        <path d="M1 1C4 0 14 0 17 1 18 5 16 10 13 11H5C2 10 0 5 1 1Z" />
        <path d="M6 12H12V14H6ZM6 15H12V17H6ZM6 18H12V20H6ZM7 21H11V23H7ZM8 24H10V26H8Z" />
      </svg>
    ),
  },
  {
    label: "Extraction",
    icon: (
      <svg viewBox="0 0 39 28" className="h-[28px] w-[39px]" fill="#999">
        <path d="M1 9H12V20H28V9H38V27H1Z" />
        <text x="20" y="12" fontSize="14" textAnchor="middle" fontFamily="Liberation Sans">?</text>
      </svg>
    ),
  },
  {
    label: "Denture",
    icon: (
      <svg viewBox="0 0 24 24" className="h-[24px] w-[24px]" fill="#999">
        <path d="M6 1H18C22 1 24 5 24 9H0C0 5 2 1 6 1ZM0 15H24C24 20 22 23 18 23H6C2 23 0 20 0 15Z" />
        <path d="M1 10H23V14H1Z" />
        <path d="M5 9V15M9 9V15M13 9V15M17 9V15" stroke="#fff" strokeWidth="1" />
      </svg>
    ),
  },
  { label: "Ortho", icon: <IcoTooth hole />, noOffset: true },
];

function SidePanel() {
  return (
    <div className="flex w-[443px] shrink-0 flex-col border-t-[3px] border-t-[#555] font-['DejaVu_Sans',sans-serif]">
      <div className="flex h-[41px] shrink-0 items-stretch bg-[#f5f5f5] text-[14px]">
        <div className="flex w-[138px] items-center justify-center bg-[#f5f5f5] text-[#333]">Pre-existing</div>
        <div className="w-[5px] bg-[#d8d8d8]" />
        <div className="flex w-[140px] items-center justify-center text-[#333]">Completed</div>
        <div className="w-[3px] bg-[#d8d8d8]" />
        <div className="flex w-[140px] items-center justify-center bg-[#b90b33] font-['Liberation_Sans',sans-serif] text-[15px] text-[#f0d5dd]">TxPlans</div>
        <div className="flex-1 bg-gradient-to-r from-[#d0d0d0] to-[#f0f0f0]" />
      </div>
      <div className="flex flex-1 flex-col gap-[26.5px] bg-[#b90b33] pl-[24px] pr-[17px] pt-[14px]">
        {treatments.map((t) => (
          <div key={t.label} className={`grid h-[44px] grid-cols-[1fr_auto_1fr] items-center rounded-[6px] bg-white text-[15.5px] text-[#999] ${t.noOffset ? "" : "pl-[44px]"}`}>
            <div className="flex justify-end pr-[24px]">{t.icon}</div>
            <span>{t.label}</span>
            <span />
          </div>
        ))}
      </div>
    </div>
  );
}

export default function App() {
  return (
    <div className="h-[1275px] w-[2340px] overflow-hidden bg-[#f5f5f5] font-['Liberation_Sans',sans-serif]">
      <TopBars />
      <PatientPanel />
      <Tabs />
      <ActionBar />
      <FilterBar />
      <div className="flex h-[753px]">
        <div className="flex w-[1887px] shrink-0 flex-col">
          <Chart />
          <div className="h-[3px] shrink-0 bg-[#f5f5f5]" />
          <Table />
        </div>
        <div className="w-[10px] shrink-0 bg-[#c9d0d6]" />
        <SidePanel />
      </div>
      <div className="h-[6px] bg-[#dfe3e5]" />
      <div className="h-[11px] border-b-2 border-[#a5a5a5] bg-[#eceeef]" />
      <div className="flex h-[18px] justify-center bg-[#d3d7da] pr-[74px] pt-[5px] text-[15.5px] text-[#333]">
        <span className="whitespace-nowrap">
          © 2024 Planet DDS | <span className="text-[#3b63b5]">Privacy Policy</span> | &nbsp;Page Time Left (hh:mm:ss) 1:59:55
        </span>
      </div>
    </div>
  );
}
